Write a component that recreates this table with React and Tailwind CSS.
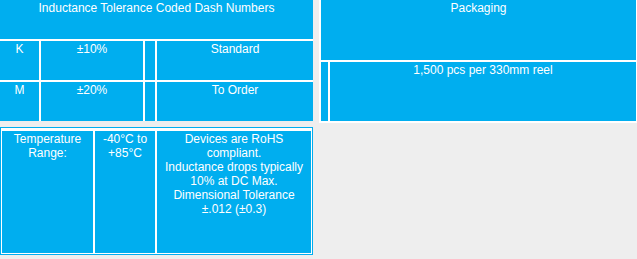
export default function App() {
  const cell = "bg-[#00aeef] text-center pt-px";
  return (
    <div className="w-[637px] h-[259px] overflow-hidden bg-[#eeeeee] text-white text-[12px] leading-[14px] font-['Liberation_Sans',Arial,sans-serif]">
      <div className="flex items-start">
        <div className="w-[313px] bg-white flex flex-col gap-[2px]">
          <div className={`${cell} h-[39px]`}>Inductance Tolerance Coded Dash Numbers</div>
          <div className="flex gap-[2px] h-[39px]">
            <div className={`${cell} w-[39px]`}>K</div>
            <div className={`${cell} w-[102px]`}>±10%</div>
            <div className={`${cell} w-[10px]`}></div>
            <div className={`${cell} flex-1`}>Standard</div>
          </div>
          <div className="flex gap-[2px] h-[39px]">
            <div className={`${cell} w-[39px]`}>M</div>
            <div className={`${cell} w-[102px]`}>±20%</div>
            <div className={`${cell} w-[10px]`}></div>
            <div className={`${cell} flex-1`}>To Order</div>
          </div>
        </div>
        <div className="ml-[6px] w-[318px] bg-white pl-[2px] pr-px pb-[2px] flex flex-col gap-[2px]">
          <div className={`${cell} h-[60px]`}>Packaging</div>
          <div className="flex gap-[2px] h-[59px]">
            <div className={`${cell} w-[7px]`}></div>
            <div className={`${cell} flex-1 pt-[2px]`}>1,500 pcs per 330mm reel</div>
          </div>
        </div>
      </div>
      <div className="mt-[4px] w-[313px] h-[128px] border border-[#00aeef] bg-white px-px pt-[3px] pb-px flex gap-[2px]">
        <div className={`${cell} w-[91px] pt-[2px]`}>Temperature Range:</div>
        <div className={`${cell} w-[60px] pt-[2px]`}>-40°C to +85°C</div>
        <div className={`${cell} w-[154px] pt-[2px]`}>
          Devices are RoHS compliant.
          <br />
          Inductance drops typically 10% at DC Max.
          <br />
          Dimensional Tolerance
          <br />
          ±.012 (±0.3)
        </div>
      </div>
    </div>
  );
}
